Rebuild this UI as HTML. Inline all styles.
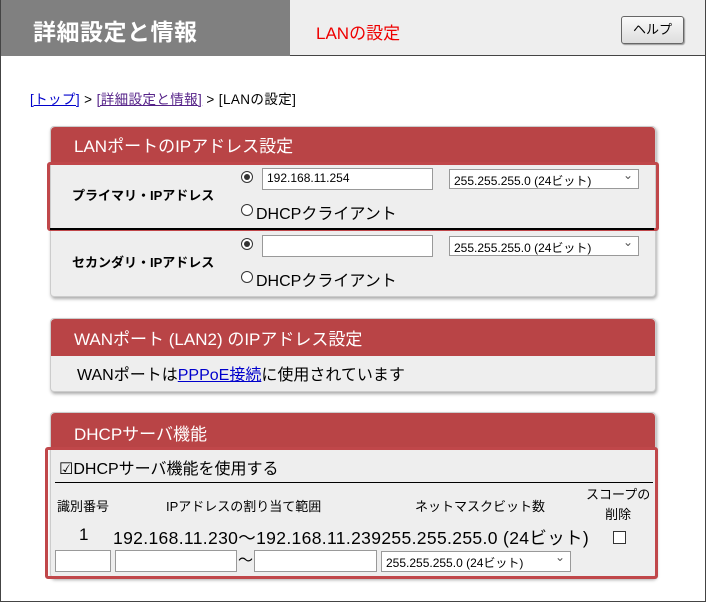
<!DOCTYPE html>
<html><head><meta charset="utf-8"><style>
*{margin:0;padding:0;box-sizing:border-box}
body{width:706px;height:602px;background:#fff;font-family:"Liberation Sans","Noto Sans CJK JP",sans-serif;position:relative;overflow:hidden;color:#000}
.a{position:absolute;white-space:nowrap}
.frame{position:absolute;left:0;top:0;width:706px;height:602px;border:1px solid #444;border-top:none}
.hdr{position:absolute;left:0;top:0;width:706px;height:56px;background:#eee;border-bottom:1px solid #444}
.hg{position:absolute;left:0;top:0;width:290px;height:56px;background:#808080}
.panel{position:absolute;left:50px;width:606px;background:#eee;border-radius:4px;box-shadow:1px 2px 3px #aaa;border:1px solid #ccc}
.ph{position:absolute;left:0;top:0;width:100%;background:#b94446;border-radius:4px 4px 0 0;color:#fff;font-size:17px;padding-left:23px}
.red{position:absolute;border:3px solid #c0474a;border-radius:3px}
.inp{position:absolute;background:#fff;border:1px solid #999;font-size:12px;padding:2px 4px}
.sel{position:absolute;background:#fff;border:1px solid #999;font-size:12px;padding:2px 4px}
.sel:after{content:"⌄";position:absolute;right:5px;top:-2px;font-size:12px;color:#555}
.rad{position:absolute;width:12px;height:12px;border:1px solid #333;border-radius:50%;background:#fff}
.rad.on:after{content:"";position:absolute;left:2px;top:2px;width:6px;height:6px;border-radius:50%;background:#333}
</style></head><body>
<div class="hdr"><div class="hg"></div></div>
<div class="a" style="left:33px;top:13px;font-size:23px;font-weight:bold;color:#fff;letter-spacing:0.5px">詳細設定と情報</div>
<div class="a" style="left:316px;top:19px;font-size:17px;color:#e00">LANの設定</div>
<div class="a" style="left:621px;top:16px;width:63px;height:28px;border:1px solid #666;border-radius:3px;background:linear-gradient(#fafafa,#ddd);font-size:13px;text-align:center;line-height:26px;box-shadow:1px 1px 1px #999">ヘルプ</div>
<div class="frame"></div>
<div class="a" style="left:30px;top:88px;font-size:13.5px;letter-spacing:0.4px"><span style="color:#00c;text-decoration:underline">[トップ]</span> &gt; <span style="color:#528;text-decoration:underline">[詳細設定と情報]</span> &gt; [LANの設定]</div>

<div class="panel" style="top:126px;height:171px">
<div class="ph" style="height:37px;line-height:40px">LANポートのIPアドレス設定</div>
</div>
<div class="red" style="left:47px;top:162px;width:612px;height:69px"></div>
<div class="a" style="left:50px;top:228px;width:604px;height:2px;background:#000"></div>
<div class="a" style="left:72px;top:185px;font-size:13px;font-weight:bold">プライマリ・IPアドレス</div>
<div class="rad on" style="left:241px;top:171px"></div>
<div class="inp" style="left:262px;top:168px;width:171px;height:22px">192.168.11.254</div>
<div class="sel" style="left:449px;top:169px;width:190px;height:20px">255.255.255.0 (24ビット)</div>
<div class="rad" style="left:241px;top:204px"></div>
<div class="a" style="left:256px;top:200px;font-size:16px">DHCPクライアント</div>
<div class="a" style="left:72px;top:252px;font-size:13px;font-weight:bold">セカンダリ・IPアドレス</div>
<div class="rad on" style="left:241px;top:238px"></div>
<div class="inp" style="left:262px;top:235px;width:171px;height:22px"></div>
<div class="sel" style="left:449px;top:236px;width:190px;height:20px">255.255.255.0 (24ビット)</div>
<div class="rad" style="left:241px;top:271px"></div>
<div class="a" style="left:256px;top:267px;font-size:16px">DHCPクライアント</div>

<div class="panel" style="top:318px;height:74px">
<div class="ph" style="height:37px;line-height:42px">WANポート (LAN2) のIPアドレス設定</div>
</div>
<div class="a" style="left:77px;top:361px;font-size:16px">WANポートは<span style="color:#00c;text-decoration:underline">PPPoE接続</span>に使用されています</div>

<div class="panel" style="top:412px;height:166px">
<div class="ph" style="height:37px;line-height:44px">DHCPサーバ機能</div>
</div>
<div class="red" style="left:45px;top:447px;width:613px;height:132px"></div>
<div class="a" style="left:59px;top:455px;font-size:16px">☑DHCPサーバ機能を使用する</div>
<div class="a" style="left:55px;top:482px;width:598px;height:1px;background:#000"></div>
<div class="a" style="left:57px;top:496px;font-size:13px">識別番号</div>
<div class="a" style="left:166px;top:496px;font-size:13px">IPアドレスの割り当て範囲</div>
<div class="a" style="left:415px;top:496px;font-size:13px">ネットマスクビット数</div>
<div class="a" style="left:586px;top:485px;font-size:13px;text-align:center;line-height:20px">スコープの<br>削除</div>
<div class="a" style="left:79px;top:525px;font-size:17px">1</div>
<div class="a" style="left:113px;top:525px;font-size:17.5px;letter-spacing:0.35px">192.168.11.230～192.168.11.239255.255.255.0 (24ビット)</div>
<div class="a" style="left:613px;top:531px;width:13px;height:13px;border:1px solid #333;background:#fff"></div>
<div class="inp" style="left:55px;top:550px;width:56px;height:22px"></div>
<div class="inp" style="left:115px;top:550px;width:122px;height:22px"></div>
<div class="a" style="left:238px;top:549px;font-size:15px">～</div>
<div class="inp" style="left:254px;top:550px;width:123px;height:22px"></div>
<div class="sel" style="left:381px;top:551px;width:190px;height:21px">255.255.255.0 (24ビット)</div>
</body></html>
